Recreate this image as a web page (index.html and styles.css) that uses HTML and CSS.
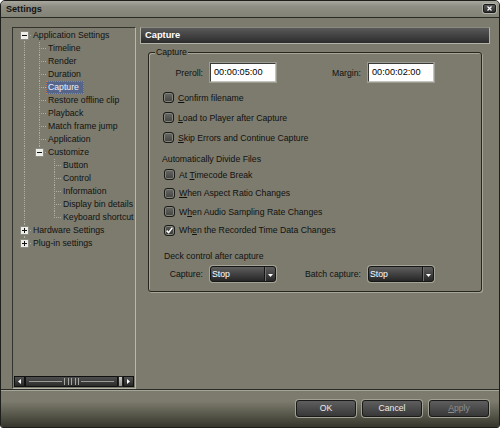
FILE: index.html
```html
<!DOCTYPE html>
<html>
<head>
<meta charset="utf-8">
<title>Settings</title>
<link rel="stylesheet" href="styles.css">
</head>
<body>
<div class="window">
  <div class="titlebar">
    <span class="title">Settings</span>
    <span class="close"><svg width="5" height="5" viewBox="0 0 5 5"><path d="M0.5 0.5l4 4M4.5 0.5l-4 4" stroke="#fff" stroke-width="1.2"/></svg></span>
  </div>
  <div class="main">
    <div class="tree">
      <div class="tree-list">
        <div class="row"><span class="g bx-first"><svg class="xb" width="9" height="9" viewBox="0 0 9 9"><rect x=".5" y=".5" width="8" height="8" fill="#eeeee8" stroke="#8a8a80"/><path d="M2 4.5h5" stroke="#111"/></svg></span><span class="txt">Application Settings</span></div>
        <div class="row"><span class="g v"></span><span class="g t"></span><span class="txt">Timeline</span></div>
        <div class="row"><span class="g v"></span><span class="g t"></span><span class="txt">Render</span></div>
        <div class="row"><span class="g v"></span><span class="g t"></span><span class="txt">Duration</span></div>
        <div class="row"><span class="g v"></span><span class="g t"></span><span class="txt sel">Capture</span></div>
        <div class="row"><span class="g v"></span><span class="g t"></span><span class="txt">Restore offline clip</span></div>
        <div class="row"><span class="g v"></span><span class="g t"></span><span class="txt">Playback</span></div>
        <div class="row"><span class="g v"></span><span class="g t"></span><span class="txt">Match frame jump</span></div>
        <div class="row"><span class="g v"></span><span class="g t"></span><span class="txt">Application</span></div>
        <div class="row"><span class="g v"></span><span class="g bx-last"><svg class="xb" width="9" height="9" viewBox="0 0 9 9"><rect x=".5" y=".5" width="8" height="8" fill="#eeeee8" stroke="#8a8a80"/><path d="M2 4.5h5" stroke="#111"/></svg></span><span class="txt">Customize</span></div>
        <div class="row"><span class="g v"></span><span class="g"></span><span class="g t"></span><span class="txt">Button</span></div>
        <div class="row"><span class="g v"></span><span class="g"></span><span class="g t"></span><span class="txt">Control</span></div>
        <div class="row"><span class="g v"></span><span class="g"></span><span class="g t"></span><span class="txt">Information</span></div>
        <div class="row"><span class="g v"></span><span class="g"></span><span class="g t"></span><span class="txt">Display bin details</span></div>
        <div class="row"><span class="g v"></span><span class="g"></span><span class="g l"></span><span class="txt">Keyboard shortcut</span></div>
        <div class="row"><span class="g bx-mid"><svg class="xb" width="9" height="9" viewBox="0 0 9 9"><rect x=".5" y=".5" width="8" height="8" fill="#eeeee8" stroke="#8a8a80"/><path d="M2 4.5h5M4.5 2v5" stroke="#111"/></svg></span><span class="txt">Hardware Settings</span></div>
        <div class="row"><span class="g bx-end"><svg class="xb" width="9" height="9" viewBox="0 0 9 9"><rect x=".5" y=".5" width="8" height="8" fill="#eeeee8" stroke="#8a8a80"/><path d="M2 4.5h5M4.5 2v5" stroke="#111"/></svg></span><span class="txt">Plug-in settings</span></div>
      </div>
      <div class="hscroll">
        <span class="sb-btn"><svg width="3" height="5" viewBox="0 0 3 5"><path d="M3 0v5L0 2.5z" fill="#fff"/></svg></span>
        <span class="sb-thumb"><span class="sb-line"></span><span class="grip"><i></i><i></i><i></i><i></i><i></i></span><span class="sb-line"></span></span>
        <span class="sb-light"></span>
        <span class="sb-btn"><svg width="3" height="5" viewBox="0 0 3 5"><path d="M0 0v5L3 2.5z" fill="#fff"/></svg></span>
      </div>
    </div>
    <div class="content">
      <div class="header">Capture</div>
      <div class="group">
        <div class="group-title">Capture</div>
        <div class="group-body">
          <div class="pair-row">
            <span class="lbl">Preroll:</span><span class="tc">00:00:05:00</span>
            <span class="lbl">Margin:</span><span class="tc">00:00:02:00</span>
          </div>
          <div class="cb-row first"><span class="cb"></span><span><u>C</u>onfirm filename</span></div>
          <div class="cb-row"><span class="cb"></span><span><u>L</u>oad to Player after Capture</span></div>
          <div class="cb-row"><span class="cb"></span><span><u>S</u>kip Errors and Continue Capture</span></div>
          <div class="heading">Automatically Divide Files</div>
          <div class="cb-row sm"><span class="cb"></span><span>At <u>T</u>imecode Break</span></div>
          <div class="cb-row sm"><span class="cb"></span><span><u>W</u>hen Aspect Ratio Changes</span></div>
          <div class="cb-row sm"><span class="cb"></span><span>W<u>h</u>en Audio Sampling Rate Changes</span></div>
          <div class="cb-row sm"><span class="cb checked"><svg width="9" height="9" viewBox="0 0 9 9"><path d="M1.6 4.6l2 2 3.8-5" stroke="#fff" stroke-width="1.5" fill="none"/></svg></span><span>Wh<u>e</u>n the Recorded Time Data Changes</span></div>
          <div class="heading deck">Deck control after capture</div>
          <div class="pair-row dd-row">
            <span class="lbl">Capture:</span>
            <span class="dd"><span class="dd-text">Stop</span><span class="dd-btn"><svg width="5" height="4" viewBox="0 0 5 4"><path d="M0 0h5L2.5 3z" fill="#fff"/></svg></span></span>
            <span class="lbl">Batch capture:</span>
            <span class="dd"><span class="dd-text">Stop</span><span class="dd-btn"><svg width="5" height="4" viewBox="0 0 5 4"><path d="M0 0h5L2.5 3z" fill="#fff"/></svg></span></span>
          </div>
        </div>
      </div>
    </div>
  </div>
  <div class="sep"></div>
  <div class="footer">
    <span class="btn ok">OK</span>
    <span class="btn cancel">Cancel</span>
    <span class="btn apply"><u>A</u>pply</span>
  </div>
</div>
</body>
</html>
```

FILE: styles.css
```css
:root {
  --bg: #7c7b6d;
  --ln: #aeaea2;
}
* { box-sizing: border-box; }
html, body { margin: 0; padding: 0; background: #ffffff; }
body {
  font-family: "Liberation Sans", Arial, sans-serif;
  font-size: 8.7px;
  color: #111;
}
.window {
  width: 500px;
  height: 428px;
  background: var(--bg);
  border: 1px solid #1e1e1a;
  border-radius: 5px 5px 3px 3px;
  overflow: hidden;
  display: flex;
  flex-direction: column;
}
.titlebar {
  height: 17px;
  flex: none;
  border-bottom: 1px solid #2a2a26;
  background: linear-gradient(#a8a89e 0, #8e8e84 35%, #828277 100%);
  display: flex;
  align-items: center;
  justify-content: space-between;
  padding: 0 3px 0 5px;
}
.title {
  font-weight: bold;
  font-size: 9.1px;
  color: #141414;
}
.close {
  width: 13px;
  height: 9px;
  margin-top: -2px;
  border: 1px solid #1a1a1a;
  border-radius: 2px;
  background: linear-gradient(#5a5a5a, #2a2a2a);
  box-shadow: 0 0 0 1px #b0b0a6;
  display: flex;
  align-items: center;
  justify-content: center;
}
.close svg { display: block; }

.main {
  height: 371px;
  flex: none;
  display: flex;
  gap: 4px;
  padding: 9px 9px 0 11px;
}
.tree {
  width: 124px;
  height: 362px;
  flex: none;
  border: 1px solid;
  border-color: #34342e #b8b8ac #b8b8ac #34342e;
  display: flex;
  flex-direction: column;
  overflow: hidden;
}
.tree-list {
  flex: 1;
  padding: 1px 0 0 4px;
  overflow: hidden;
}
.row {
  display: flex;
  height: 13px;
  line-height: 13px;
  white-space: nowrap;
}
.g {
  width: 15px;
  height: 13px;
  flex: none;
  display: block;
}
.g .xb { display: block; margin: 2px 0 0 3px; }
.v {
  background: repeating-linear-gradient(to bottom, var(--ln) 0 1px, transparent 1px 2px) 7px 0 / 1px 13px no-repeat;
}
.t {
  background:
    repeating-linear-gradient(to bottom, var(--ln) 0 1px, transparent 1px 2px) 7px 0 / 1px 13px no-repeat,
    repeating-linear-gradient(to right, var(--ln) 0 1px, transparent 1px 2px) 7px 6px / 8px 1px no-repeat;
}
.l {
  background:
    repeating-linear-gradient(to bottom, var(--ln) 0 1px, transparent 1px 2px) 7px 0 / 1px 7px no-repeat,
    repeating-linear-gradient(to right, var(--ln) 0 1px, transparent 1px 2px) 7px 6px / 8px 1px no-repeat;
}
.bx-first {
  background:
    repeating-linear-gradient(to bottom, var(--ln) 0 1px, transparent 1px 2px) 7px 6px / 1px 7px no-repeat,
    repeating-linear-gradient(to right, var(--ln) 0 1px, transparent 1px 2px) 7px 6px / 8px 1px no-repeat;
}
.bx-mid { background:
    repeating-linear-gradient(to bottom, var(--ln) 0 1px, transparent 1px 2px) 7px 0 / 1px 13px no-repeat,
    repeating-linear-gradient(to right, var(--ln) 0 1px, transparent 1px 2px) 7px 6px / 8px 1px no-repeat;
}
.bx-last, .bx-end { background:
    repeating-linear-gradient(to bottom, var(--ln) 0 1px, transparent 1px 2px) 7px 0 / 1px 7px no-repeat,
    repeating-linear-gradient(to right, var(--ln) 0 1px, transparent 1px 2px) 7px 6px / 8px 1px no-repeat;
}
.txt {
  padding: 0 1px;
  color: #121212;
}
.txt.sel {
  margin-left: -1px;
  padding: 0 5px 0 2px;
  background: #56668a;
  outline: 1px dotted #c27a4e;
  outline-offset: -1px;
  color: #eef0f6;
}

.hscroll {
  height: 11px;
  margin: 0 1px 1px 1px;
  display: flex;
  background: #1e1e1e;
  flex: none;
}
.sb-btn {
  width: 11px;
  flex: none;
  border: 1px solid #111;
  background: linear-gradient(#525252, #262626);
  display: flex;
  align-items: center;
  justify-content: center;
}
.sb-btn svg { display: block; }
.sb-thumb {
  flex: 1;
  border: 1px solid #111;
  border-radius: 1px;
  background: linear-gradient(#4e4e4e, #2c2c2c);
  display: flex;
  align-items: center;
  padding: 0 3px;
  gap: 2px;
}
.sb-line {
  flex: 1;
  height: 1px;
  background: #9a9a94;
}
.grip {
  display: flex;
  gap: 2.5px;
  height: 7px;
}
.grip i {
  width: 1px;
  height: 7px;
  background: #a6a6a0;
}
.sb-light {
  width: 5px;
  flex: none;
  background: linear-gradient(#c8c8c0, #909088);
  border: 1px solid #222;
}

.content {
  width: 350px;
  flex: none;
  display: flex;
  flex-direction: column;
}
.header {
  height: 17px;
  border: 1px solid #b2b2a6;
  border-top-color: #8a8a80;
  background: linear-gradient(#595959, #2c2c2c);
  color: #ffffff;
  font-weight: bold;
  font-size: 9.3px;
  line-height: 15px;
  padding-left: 4px;
}
.group {
  margin: 8px 8px 0 8px;
  height: 240px;
  border: 1px solid #26261f;
  border-radius: 3px;
  box-shadow: 1px 1px 0 #a6a698, inset 1px 1px 0 #a6a698;
}
.group-title {
  width: max-content;
  margin: -6px 0 0 6px;
  padding: 0 1px;
  line-height: 11px;
  background: var(--bg);
  color: #111;
}
.group-body {
  padding: 5px 0 0 14px;
  color: #111;
}
.pair-row {
  display: grid;
  grid-template-columns: 47px 66px 92px 66px;
  align-items: center;
  height: 19px;
}
.lbl {
  text-align: right;
  padding-right: 7px;
  white-space: nowrap;
}
.tc {
  height: 19px;
  background: #ffffff;
  border: 1px solid;
  border-color: #3a3a38 #c4c4bc #c4c4bc #3a3a38;
  box-shadow: 0 0 0 1px #9c9c90;
  font-size: 9.2px;
  line-height: 17px;
  padding-left: 3px;
  color: #000;
}
.cb-row {
  display: flex;
  align-items: center;
  height: 20px;
  white-space: nowrap;
}
.cb-row.first { margin-top: 5.5px; }
.cb-row.sm { height: 18.5px; padding-left: 1px; }
.cb {
  width: 11px;
  height: 11px;
  flex: none;
  margin-right: 4px;
  border: 1px solid #1a1a18;
  border-radius: 3px;
  background: linear-gradient(#686864, #42423e);
  box-shadow: inset 0 0 0 1px #82827c;
  display: flex;
  align-items: center;
  justify-content: center;
}
.cb.checked { background: linear-gradient(#5a5a56, #383834); }
.cb svg { display: block; }
.heading {
  height: 13px;
  line-height: 13px;
  margin: 5px 0 0 -1px;
}
.heading.deck {
  margin: 10.5px 0 0 1px;
}
.dd-row {
  margin-top: 3px;
  height: 16px;
}
.dd {
  height: 16px;
  border: 1px solid #161614;
  border-radius: 3px;
  background: linear-gradient(#5e5e5e, #262626);
  box-shadow: 0 0 0 1px #a4a496;
  display: flex;
  color: #ffffff;
}
.dd-text {
  flex: 1;
  padding-left: 1px;
  line-height: 14px;
}
.dd-btn {
  width: 11px;
  flex: none;
  border-left: 1px solid #161614;
  box-shadow: inset 1px 0 #6e6e6e;
  display: flex;
  align-items: flex-end;
  justify-content: center;
  padding-bottom: 3px;
}
.dd-btn svg { display: block; }

.sep {
  height: 2px;
  flex: none;
  background: #2a2a26;
  border-bottom: 1px solid #a6a698;
}
.footer {
  flex: 1;
  display: flex;
  justify-content: flex-end;
  align-items: flex-start;
  padding: 9px 10px 0 0;
  background: linear-gradient(#7c7b6d 0, #7c7b6d 28%, #4e4e42 75%, #35352c 100%);
}
.btn {
  width: 60px;
  height: 17px;
  border: 1px solid #1a1a18;
  border-radius: 3px;
  background: linear-gradient(#5e5e5e, #383838);
  box-shadow: 0 0 0 1px #a2a294;
  color: #ececec;
  text-align: center;
  line-height: 15px;
}
.btn.cancel { margin-left: 6px; }
.btn.apply { margin-left: 7px; color: #8e8e8e; }
```
